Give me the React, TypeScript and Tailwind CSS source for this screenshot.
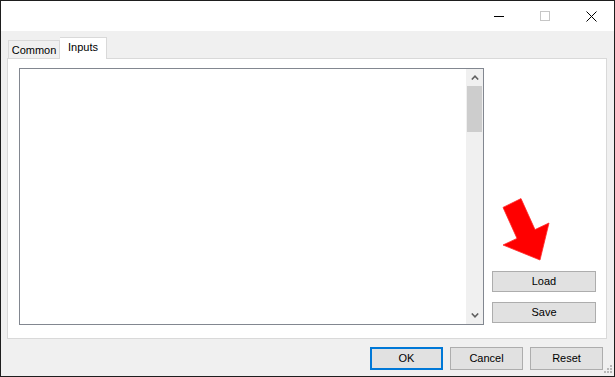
import React from 'react';

const font = "font-['Liberation_Sans',Arial,sans-serif]";

const Button: React.FC<{ label: string; primary?: boolean; className?: string }> = ({ label, primary, className }) => (
  <div
    className={`flex items-center justify-center bg-[#e1e1e1] text-[11px] text-black ${
      primary ? 'border-2 border-[#0078d7]' : 'border border-[#adadad]'
    } ${className ?? ''}`}
  >
    {label}
  </div>
);

const App: React.FC = () => {
  return (
    <div className={`relative flex h-[377px] w-[615px] flex-col border border-[#1e1e1e] bg-[#f0f0f0] ${font}`}>
      {/* Title bar */}
      <div className="flex h-[30px] shrink-0 justify-end bg-white">
        <div className="flex w-[46px] items-center justify-center">
          <div className="h-px w-[10px] bg-black" />
        </div>
        <div className="flex w-[46px] items-center justify-center">
          <div className="h-[10px] w-[10px] border border-[#c6c6c6]" />
        </div>
        <div className="flex w-[46px] items-center justify-center">
          <svg width="11" height="11" viewBox="0 0 11 11">
            <path d="M0.5 0.5 L10.5 10.5 M10.5 0.5 L0.5 10.5" stroke="#000" strokeWidth="1" />
          </svg>
        </div>
      </div>

      {/* Body */}
      <div className="flex flex-1 flex-col pl-[6px] pr-[7px]">
        {/* Tabs */}
        <div className="flex h-[27px] items-end pl-px pt-[7px]">
          <div className="flex h-[18px] w-[52px] items-center justify-center border border-b-0 border-[#d9d9d9] bg-[#f0f0f0] pt-[2px] text-[11px] text-black">
            Common
          </div>
          <div className="relative z-10 -mb-px flex h-[22px] w-[47px] items-center justify-center border border-b-0 border-l-0 border-[#d9d9d9] bg-white pb-[2px] text-[11px] text-black">
            Inputs
          </div>
        </div>

        {/* Panel */}
        <div className="flex h-[281px] border border-[#d9d9d9] bg-white pb-[13px] pl-[11px] pr-[10px] pt-[9px]">
          {/* Memo */}
          <div className="flex h-[257px] w-[465px] justify-end border border-[#828790] bg-white">
            <div className="flex w-[17px] flex-col bg-[#f0f0f0]">
              <div className="flex h-[17px] items-center justify-center">
                <svg width="8" height="5" viewBox="0 0 8 5">
                  <path d="M0.8 4.5 L4 1.2 L7.2 4.5" fill="none" stroke="#606060" strokeWidth="1.6" />
                </svg>
              </div>
              <div className="mx-px h-[46px] bg-[#cdcdcd]" />
              <div className="flex-1" />
              <div className="flex h-[17px] items-center justify-center">
                <svg width="8" height="5" viewBox="0 0 8 5">
                  <path d="M0.8 0.5 L4 3.8 L7.2 0.5" fill="none" stroke="#606060" strokeWidth="1.6" />
                </svg>
              </div>
            </div>
          </div>

          {/* Right column */}
          <div className="ml-[8px] flex h-[257px] w-[104px] flex-col justify-end pb-[2px]">
            <svg className="mb-[8px] ml-[8px]" width="52" height="68" viewBox="500 195 52 68">
              <polygon
                points="503,207.4 521,198.6 535,229.6 549,223 540,260 503,245 517,238.4"
                fill="#ff0000"
                stroke="#ff2a2a"
                strokeWidth="0.8"
                strokeLinejoin="round"
              />
            </svg>
            <Button label="Load" className="h-[21px]" />
            <Button label="Save" className="mt-[10px] h-[21px]" />
          </div>
        </div>

        {/* Dialog buttons */}
        <div className="flex justify-end gap-[7px] pr-[4px] pt-[8px]">
          <Button label="OK" primary className="h-[23px] w-[73px]" />
          <Button label="Cancel" className="h-[23px] w-[73px]" />
          <Button label="Reset" className="h-[23px] w-[73px]" />
        </div>
      </div>

      {/* Resize grip */}
      <svg className="absolute bottom-[2px] right-[1px]" width="10" height="10" viewBox="0 0 10 10">
        <rect x="7" y="1" width="2" height="2" fill="#b8b8b8" />
        <rect x="4" y="4" width="2" height="2" fill="#b8b8b8" />
        <rect x="7" y="4" width="2" height="2" fill="#b8b8b8" />
        <rect x="1" y="7" width="2" height="2" fill="#b8b8b8" />
        <rect x="4" y="7" width="2" height="2" fill="#b8b8b8" />
        <rect x="7" y="7" width="2" height="2" fill="#b8b8b8" />
      </svg>
    </div>
  );
};

export default App;
